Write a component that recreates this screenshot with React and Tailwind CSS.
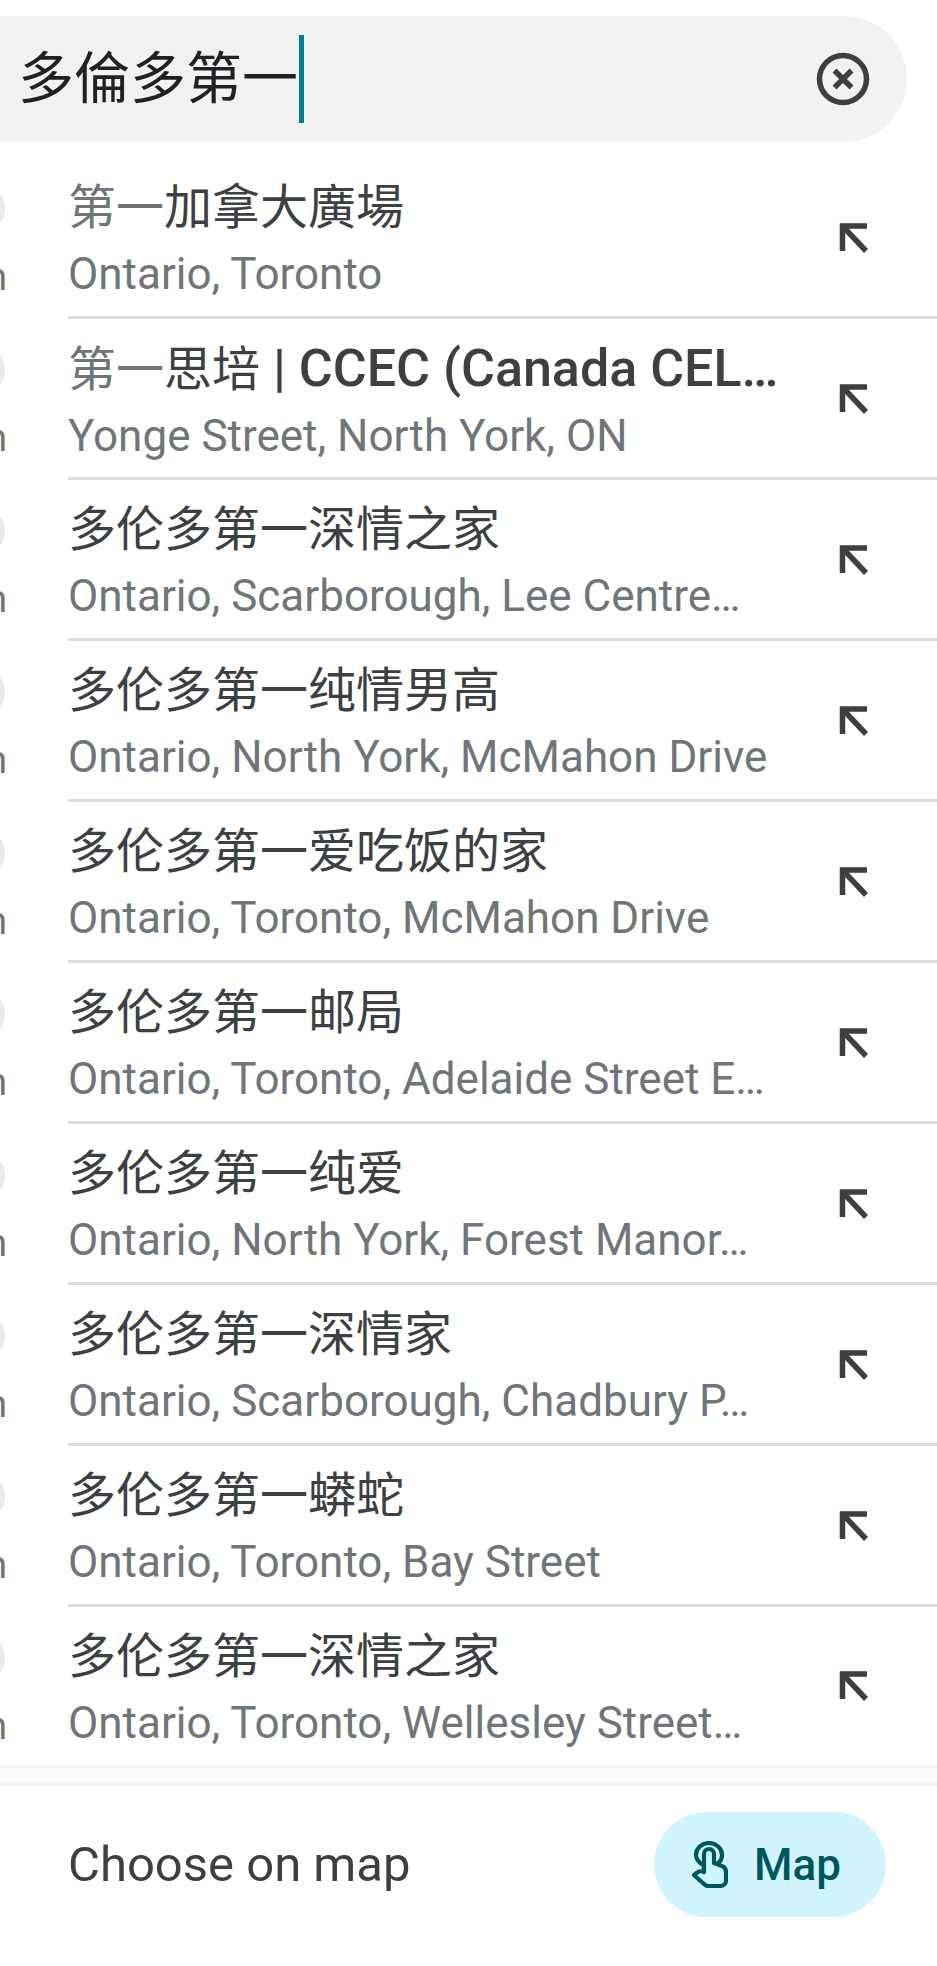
const FONT = "font-['Roboto','Noto_Sans_CJK_SC',sans-serif]";

const rows = [
  { lead: '第一', title: '加拿大廣場', sub: 'Ontario, Toronto' },
  { lead: '第一', title: '思培', bold: ' | CCEC (Canada CEL…', sub: 'Yonge Street, North York, ON' },
  { title: '多伦多第一深情之家', sub: 'Ontario, Scarborough, Lee Centre…' },
  { title: '多伦多第一纯情男高', sub: 'Ontario, North York, McMahon Drive' },
  { title: '多伦多第一爱吃饭的家', sub: 'Ontario, Toronto, McMahon Drive' },
  { title: '多伦多第一邮局', sub: 'Ontario, Toronto, Adelaide Street E…' },
  { title: '多伦多第一纯爱', sub: 'Ontario, North York, Forest Manor…' },
  { title: '多伦多第一深情家', sub: 'Ontario, Scarborough, Chadbury P…' },
  { title: '多伦多第一蟒蛇', sub: 'Ontario, Toronto, Bay Street' },
  { title: '多伦多第一深情之家', sub: 'Ontario, Toronto, Wellesley Street…' },
];

const ClearIcon = () => (
  <svg className="ml-auto" width="54" height="54" viewBox="0 0 54 54" fill="none" stroke="#3c4043">
    <circle cx="27" cy="27" r="23.5" strokeWidth="5.5" />
    <path d="M18.5 18.5L35.5 35.5M35.5 18.5L18.5 35.5" strokeWidth="5.5" />
  </svg>
);

const ArrowIcon = () => (
  <svg width="30" height="30" viewBox="0 0 30 30" fill="none" stroke="#3c4043" strokeWidth="5.5">
    <path d="M28 3H3.5V28" />
    <path d="M3.5 3L27 28" />
  </svg>
);

const TapIcon = () => (
  <svg width="36" height="47" viewBox="0 0 36 47" fill="none" stroke="#00565f" strokeWidth="4.2" strokeLinejoin="round" strokeLinecap="round">
    <path d="M11 24C6 21 4 17 4 14A13 12 0 0 1 30 14C30 17 29 20 26 22" />
    <path d="M12 29V13a5 5 0 0 1 10 0v9l8 3c3 1 4 3 4 6v9c0 3-3 5-6 5H16c-2 0-3-1-4-2L2 34l4-3c2-1 4-1 6 0" />
  </svg>
);

const Row = ({ row, last }) => (
  <div className={`flex ${last ? 'h-[158px]' : 'h-[161px]'}`}>
    <div className="flex w-[5px] flex-col items-end overflow-hidden pt-[26px]">
      <div className="h-[50px] w-[50px] shrink-0 rounded-full bg-[#e8eaed]" />
    </div>
    <span className="mt-[100px] h-[38px] w-[7px] -ml-[5px] overflow-hidden text-right text-[38px] leading-[38px] text-[#70757a]" dir="rtl">
      m
    </span>
    <div className={`ml-[61px] flex min-w-0 flex-1 items-center ${last ? '' : 'border-b-[3px] border-[#dadce0]'}`}>
      <div className="mt-[4px] min-w-0 flex-1">
        <div className="whitespace-nowrap text-[48px] leading-[60px] text-[#3c4043]">
          {row.lead && <span className="text-[#70757a]">{row.lead}</span>}
          {row.title}
          {row.bold && <span className="text-[52px] font-medium">{row.bold}</span>}
        </div>
        <div className="mt-[10px] whitespace-nowrap text-[44px] leading-[52px] text-[#70757a]">{row.sub}</div>
      </div>
      <div className={`mr-[68px] shrink-0 ${last ? '-mt-[1px]' : 'mt-[2px]'}`}>
        <ArrowIcon />
      </div>
    </div>
  </div>
);

export default function App() {
  return (
    <div className={`h-[1966px] w-[937px] overflow-hidden bg-white ${FONT}`}>
      <div className="pt-[16px]">
        <div className="flex h-[126px] w-[907px] items-center rounded-r-[63px] bg-[#f2f2f3] pl-[18px] pr-[37px]">
          <span className="text-[56px] leading-[70px] text-[#202124]">多倫多第一</span>
          <div className="ml-[1px] h-[88px] w-[5px] bg-[#00838f]" />
          <ClearIcon />
        </div>
      </div>
      <div className="pt-[16px]">
        {rows.map((row, i) => (
          <Row key={i} row={row} last={i === rows.length - 1} />
        ))}
      </div>
      <div className="h-[21px] border-y-[3px] border-[#f1f3f4] bg-[#f8f9fa]" />
      <div className="flex items-center pl-[68px] pr-[51px] pt-[26px]">
        <span className="text-[49px] leading-[60px] text-[#3c4043]">Choose on map</span>
        <div className="ml-auto flex h-[105px] w-[232px] items-center gap-[26px] rounded-full bg-[#d1f5fe] pl-[38px]">
          <TapIcon />
          <span className="text-[44px] font-medium leading-[60px] text-[#00565f]">Map</span>
        </div>
      </div>
    </div>
  );
}
